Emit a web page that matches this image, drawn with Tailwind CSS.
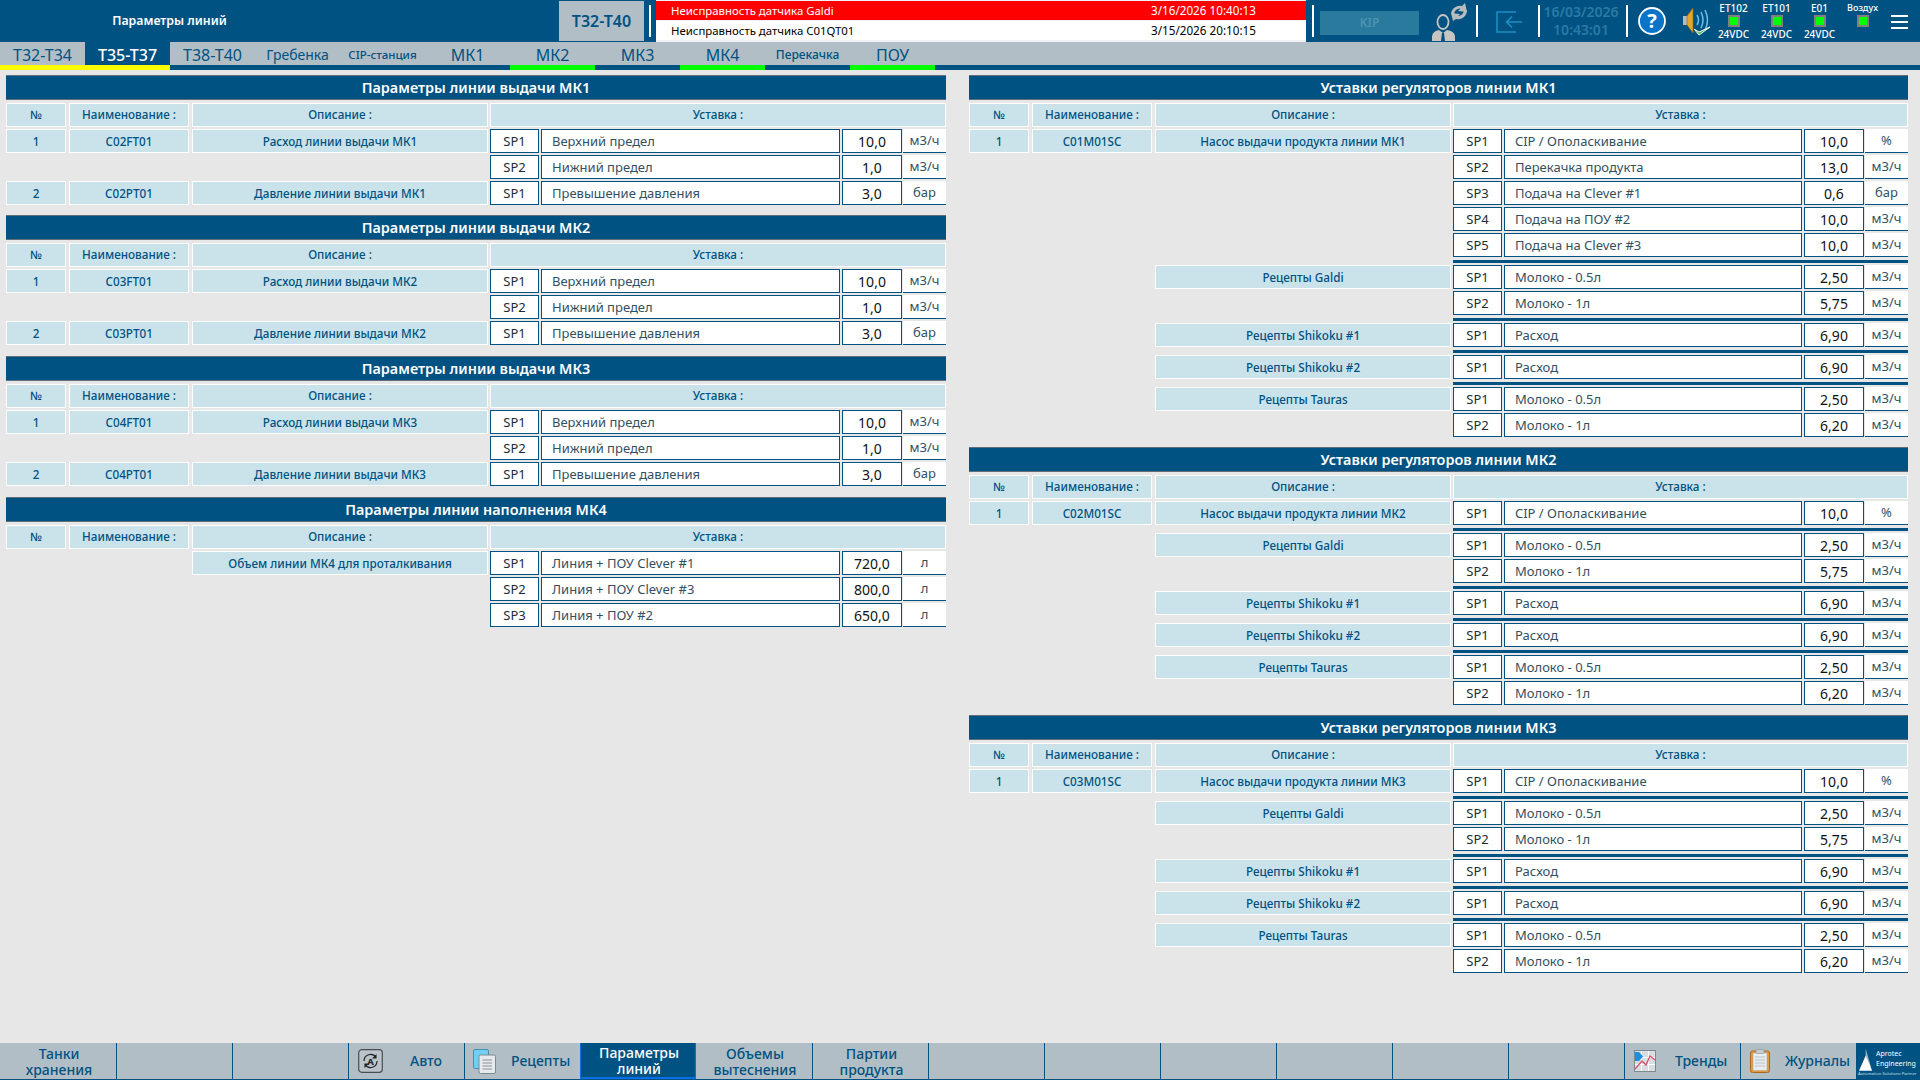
<!DOCTYPE html>
<html lang="ru">
<head>
<meta charset="utf-8">
<title>Параметры линий</title>
<script src="https://cdn.jsdelivr.net/npm/@tailwindcss/browser@4"></script>
</head>
<body class="m-0">
<div class="w-[1920px] h-[1080px] overflow-hidden flex flex-col bg-[#e7e7e7] font-['Noto_Sans',sans-serif] text-[#005282]">

  <!-- header -->
  <header class="h-[42px] shrink-0 flex items-stretch bg-[#005282] text-white">
    <div class="w-[559px] flex items-center justify-center pr-[220px] pt-[1px] text-[12.3px] font-semibold"><span>Параметры линий</span></div>
    <div class="w-[85px] my-[1px] bg-[#b2bec5] text-[#005282] text-[16px] font-semibold flex items-center justify-center">Т32-Т40</div>
    <div class="w-[2px] my-[5px] ml-[5px] bg-white"></div>
    <div class="w-[650px] ml-[5px] bg-[#eef0f1] flex flex-col pt-[1px] gap-[1px]">
      <div class="h-[19px] bg-[#ff0000] text-white flex items-center"><span class="w-[495px] pl-[15px] text-[11.4px]">Неисправность датчика Galdi</span><span class="text-[11.7px]">3/16/2026 10:40:13</span></div>
      <div class="h-[19px] bg-white text-black flex items-center"><span class="w-[495px] pl-[15px] text-[11.4px]">Неисправность датчика C01QT01</span><span class="text-[11.7px]">3/15/2026 20:10:15</span></div>
    </div>
    <div class="w-[2px] my-[5px] ml-[6px] bg-white"></div>
    <div class="w-[99px] h-[24px] mt-[11px] ml-[6px] bg-[#2a7a9e] text-[#4b93b3] text-[12px] font-semibold flex items-center justify-center">KIP</div>
    <svg class="w-[36px] h-[39px] mt-[2px] ml-[13px]" viewBox="0 0 36 39">
      <ellipse cx="11" cy="20" rx="5.5" ry="7" fill="none" stroke="#c8c4c2" stroke-width="1.8"/>
      <path d="M0 39 V34 Q1 29 7 28 L11 31 L15 28 Q22 29 23 34 V39 Z" fill="#c8c4c2"/>
      <path d="M10 31 h2 l1 8 h-4 Z" fill="#005282"/>
      <path d="M19 12 A9 9 0 0 1 30 4 L33 1 L35 10 L26 9 L28.5 6.5 A6 6 0 0 0 22 13 Z" fill="#b9bcbd"/>
      <path d="M35 8 A9 9 0 0 1 24 17 L21 19 L19 11 L28 12 L26 14 A6 6 0 0 0 32 8 Z" fill="#b9bcbd"/>
    </svg>
    <div class="w-[2px] my-[5px] ml-[8px] bg-white"></div>
    <svg class="w-[27px] h-[22px] mt-[11px] ml-[18px]" viewBox="0 0 27 22" fill="none" stroke="#1a8fc4" stroke-width="1.6">
      <path d="M20 1 H1 V21 H20"/><path d="M26 11 H11 M16 5.5 L10.5 11 L16 16.5"/>
    </svg>
    <div class="w-[2px] my-[5px] ml-[15px] bg-white"></div>
    <div class="w-[86px] pr-[4px] flex flex-col items-center justify-center text-[14px] leading-[18px] font-semibold text-[#2a7aa5]"><span>16/03/2026</span><span>10:43:01</span></div>
    <div class="w-[2px] my-[5px] bg-white"></div>
    <svg class="w-[28px] h-[28px] mt-[7px] ml-[10px]" viewBox="0 0 28 28">
      <circle cx="14" cy="14" r="13" fill="#0a74c9" stroke="#fff" stroke-width="1.8"/>
      <text x="14" y="21" text-anchor="middle" font-size="20" font-weight="700" fill="#fff" font-family="Noto Sans">?</text>
    </svg>
    <svg class="w-[30px] h-[30px] mt-[7px] ml-[16px]" viewBox="0 0 30 30" fill="none">
      <rect x="1" y="9" width="4" height="9" fill="#b9b9b9"/>
      <path d="M5 9 L11 1 V26 L5 18 Z" fill="#e0a92a" stroke="#8a6a10" stroke-width=".6"/>
      <path d="M15 8 Q18 13 15 18 M19 5 Q23 13 19 21 M23 3 Q28 13 23 23" stroke="#6ec0ea" stroke-width="1.5"/>
      <path d="M12 22 L17 28 L28 20 L17 25 Z" fill="#3fb54a" stroke="#fff" stroke-width="1"/>
    </svg>
    <div class="w-[43px] flex flex-col items-center justify-between text-[10px] leading-[12px] font-medium pt-[2px] pb-[2px]"><span>ET102</span><span class="w-[12px] h-[12px] border-[2px] border-[#808080] bg-[#00ff00]"></span><span>24VDC</span></div>
    <div class="w-[43px] flex flex-col items-center justify-between text-[10px] leading-[12px] font-medium pt-[2px] pb-[2px]"><span>ET101</span><span class="w-[12px] h-[12px] border-[2px] border-[#808080] bg-[#00ff00]"></span><span>24VDC</span></div>
    <div class="w-[43px] flex flex-col items-center justify-between text-[10px] leading-[12px] font-medium pt-[2px] pb-[2px]"><span>E01</span><span class="w-[12px] h-[12px] border-[2px] border-[#808080] bg-[#00ff00]"></span><span>24VDC</span></div>
    <div class="w-[43px] flex flex-col items-center gap-[1px] text-[9px] leading-[12px] font-medium pt-[2px]"><span>Воздух</span><span class="w-[12px] h-[12px] border-[2px] border-[#808080] bg-[#00ff00]"></span></div>
    <div class="w-[17px] ml-[7px] mt-[15px] h-[14px] flex flex-col justify-between"><span class="h-[2px] bg-white"></span><span class="h-[2px] bg-white"></span><span class="h-[2px] bg-white"></span></div>
  </header>

  <!-- tabs -->
  <nav class="h-[28px] shrink-0 flex bg-[#b2bec5] border-b-[5px] border-[#005282]">
    <div class="w-[85px] h-[28px] pt-[2px] border-b-[5px] border-[#ffff00] flex items-center justify-center text-[16px]">Т32-Т34</div>
    <div class="w-[85px] h-[28px] pt-[2px] border-b-[5px] border-[#ffff00] bg-[#005282] text-white font-medium flex items-center justify-center text-[16px]">Т35-Т37</div>
    <div class="w-[85px] pt-[2px] flex items-center justify-center text-[16px]">Т38-Т40</div>
    <div class="w-[85px] pt-[2px] flex items-center justify-center text-[14px]">Гребенка</div>
    <div class="w-[85px] pt-[2px] flex items-center justify-center text-[11.5px] font-medium">CIP-станция</div>
    <div class="w-[85px] pt-[2px] flex items-center justify-center text-[16px]">МК1</div>
    <div class="w-[85px] h-[28px] pt-[2px] border-b-[5px] border-[#00ff00] flex items-center justify-center text-[16px]">МК2</div>
    <div class="w-[85px] pt-[2px] flex items-center justify-center text-[16px]">МК3</div>
    <div class="w-[85px] h-[28px] pt-[2px] border-b-[5px] border-[#00ff00] flex items-center justify-center text-[16px]">МК4</div>
    <div class="w-[85px] pt-[2px] flex items-center justify-center text-[12px] font-medium">Перекачка</div>
    <div class="w-[85px] h-[28px] pt-[2px] border-b-[5px] border-[#00ff00] flex items-center justify-center text-[16px]">ПОУ</div>
  </nav>

  <!-- content -->
  <main class="flex-1 min-h-0 flex pt-[5px]">
    <div id="left" class="w-[940px] ml-[6px]"></div>
    <div id="right" class="w-[939px] ml-[23px]"></div>
  </main>

  <!-- footer -->
  <footer class="h-[37px] shrink-0 flex bg-[#b2bec5] border-b-[1px] border-[#005282] text-[14px] leading-[16px] font-medium text-center">
    <div class="w-[116px] flex items-center justify-center pl-[2px] pt-[1px]">Танки<br>хранения</div>
    <div class="w-[116px] border-l border-[#005282]"></div>
    <div class="w-[116px] border-l border-[#005282]"></div>
    <div class="w-[116px] border-l border-[#005282] flex items-center pl-[9px]">
      <svg class="w-[25px] h-[24px]" viewBox="0 0 25 24" fill="none"><rect x=".7" y=".7" width="23.6" height="22.6" rx="3" fill="#b9c3c9" stroke="#4a4f52" stroke-width="1.2"/><path d="M6 12 A6.5 6.5 0 0 1 18 8.5 M19 12 A6.5 6.5 0 0 1 7 15.5" stroke="#222" stroke-width="1.2"/><path d="M18.5 5 V9.5 H14 Z M6.5 19 V14.5 H11 Z" fill="#222"/><text x="12.5" y="15.5" text-anchor="middle" font-size="9.5" font-weight="700" fill="#222" font-family="Noto Sans">A</text></svg>
      <span class="ml-[27px]">Авто</span>
    </div>
    <div class="w-[116px] border-l border-[#005282] flex items-center pl-[8px]">
      <svg class="w-[23px] h-[25px]" viewBox="0 0 23 25"><rect x=".5" y=".5" width="15" height="19" rx="1.5" fill="#6fd0f2" stroke="#4a8fae"/><rect x="6" y="6" width="16.5" height="18.5" rx="1.5" fill="#e6eaec" stroke="#7d8a90"/><path d="M9.5 11 H19 M9.5 14 H19 M9.5 17 H19 M9.5 20 H19" stroke="#8a9398"/></svg>
      <span class="ml-[15px]">Рецепты</span>
    </div>
    <div class="w-[116px] bg-[#005282] text-white border-x-[1px] border-b-[2px] border-[#0a6ee6] flex items-center justify-center pl-[2px] pt-[1px]">Параметры<br>линий</div>
    <div class="w-[116px] flex items-center justify-center pl-[2px] pt-[1px]">Объемы<br>вытеснения</div>
    <div class="w-[116px] border-l border-[#005282] flex items-center justify-center pl-[2px] pt-[1px]">Партии<br>продукта</div>
    <div class="w-[116px] border-l border-[#005282]"></div>
    <div class="w-[116px] border-l border-[#005282]"></div>
    <div class="w-[116px] border-l border-[#005282]"></div>
    <div class="w-[116px] border-l border-[#005282]"></div>
    <div class="w-[116px] border-l border-[#005282]"></div>
    <div class="w-[116px] border-l border-[#005282]"></div>
    <div class="w-[116px] border-l border-[#005282] flex items-center pl-[9px]">
      <svg class="w-[22px] h-[22px]" viewBox="0 0 22 22" fill="none"><rect x=".5" y=".5" width="21" height="21" fill="#d8dfe2" stroke="#7d8a90"/><path d="M1 7.5 H21 M1 14.5 H21 M7.5 1 V21 M14.5 1 V21" stroke="#fff"/><path d="M1 19 L8 11 L12 15 L16 6 L21 10" stroke="#e0506a" stroke-width="1.3"/><path d="M1 2 H5 L9 6.5 L5 11 H1 Z" fill="#1b8fe0"/></svg>
      <span class="ml-[19px]">Тренды</span>
    </div>
    <div class="w-[116px] border-l border-[#005282] flex items-center pl-[9px]">
      <svg class="w-[20px] h-[24px]" viewBox="0 0 20 24"><rect x=".5" y="2" width="19" height="21.5" rx="2" fill="#e79a3c" stroke="#a86a1e"/><rect x="3" y="4" width="14" height="17.5" fill="#e8edef" stroke="#9aa5aa" stroke-width=".5"/><rect x="6" y=".5" width="8" height="4" rx="1" fill="#c7ced2" stroke="#7d8a90" stroke-width=".5"/><path d="M5 8 H15 M5 11 H15 M5 14 H15 M5 17 H15" stroke="#b9c2c6"/></svg>
      <span class="ml-[15px]">Журналы</span>
    </div>
    <div class="w-[64px] bg-[#005282] text-white relative overflow-hidden">
      <svg class="absolute left-[3px] top-[5px] w-[17px] h-[23px]" viewBox="0 0 18 24"><path d="M7 0 L13 21 L7 17 Z" fill="#9fb6c5"/><path d="M7 8 L14 24 L0 24 Z" fill="#fff"/></svg>
      <span class="absolute left-[20px] top-[6px] text-[7px] leading-[10px] font-normal text-left">Aprotec<br>Engineering</span>
      <span class="absolute left-[2px] top-[28px] text-[4.2px] leading-[6px] font-normal whitespace-nowrap text-[#cfe0ea]">Automation Solutions Partner</span>
    </div>
  </footer>
</div>

<script>
const cellLabel = "w-[60px] h-[24px] shrink-0 border border-white bg-[#cae2ea] flex items-center justify-center text-[11.7px] font-medium";
const cellName = "w-[120px] h-[24px] shrink-0 border border-white bg-[#cae2ea] flex items-center justify-center text-[11.7px] font-medium";
const cellDesc = "w-[296px] h-[24px] shrink-0 border border-white bg-[#cae2ea] flex items-center justify-center text-[11.7px] font-medium";
const cellHead = "flex-1 h-[24px] border border-white bg-[#cae2ea] flex items-center justify-center text-[11.7px] font-medium";
const blank60 = "w-[60px] h-[24px] shrink-0";
const blank120 = "w-[120px] h-[24px] shrink-0";
const blank296 = "w-[296px] h-[24px] shrink-0";
const spBox = "w-[49px] h-[24px] shrink-0 border-[1.5px] border-[#005282] bg-white flex items-center justify-center pt-[2px] text-[13px] text-[#1c2c36]";
const nameBox = "flex-1 h-[24px] ml-[2px] border-[1.5px] border-[#005282] bg-white flex items-center pl-[10px] pt-[1px] text-[13px] text-[#33505f]";
const valBox = "w-[60px] h-[24px] shrink-0 ml-[2px] border-[1.5px] border-[#005282] bg-white flex items-center justify-center text-[14px] text-[#111]";
const unitBox = "w-[43px] h-[24px] shrink-0 ml-[1px] border-b-[1.5px] border-[#005282] bg-white flex items-center justify-center pt-[1px] text-[13px] text-[#33505f]";

function row(r){
  if(r==='bar') return '<div class="h-[3px] mt-[1px] ml-[484px] bg-[#005282]"></div>';
  const [n,name,desc,sp,label,val,unit]=r;
  return '<div class="flex">'
    +(n?`<div class="pt-[2px] ${cellLabel}">${n}</div>`:`<div class="${blank60}"></div>`)
    +(name?`<div class="ml-[3px] pt-[2px] ${cellName}">${name}</div>`:`<div class="ml-[3px] ${blank120}"></div>`)
    +(desc?`<div class="ml-[3px] pt-[2px] ${cellDesc}">${desc}</div>`:`<div class="ml-[3px] ${blank296}"></div>`)
    +`<div class="ml-[2px] flex-1 flex"><div class="${spBox}">${sp}</div><div class="${nameBox}">${label}</div><div class="${valBox}">${val}</div><div class="${unitBox}">${unit}</div></div></div>`;
}
function section(title,rows,mb){
  return `<section class="flex flex-col gap-[2px] ${mb}">`
    +`<div class="h-[25px] mb-[1px] border-y border-[#5f6f7a] bg-[#005282] text-white text-[14.4px] font-semibold flex items-center justify-center">${title}</div>`
    +`<div class="flex"><div class="${cellLabel}">№</div><div class="ml-[3px] ${cellName}">Наименование :</div><div class="ml-[3px] ${cellDesc}">Описание :</div><div class="ml-[2px] ${cellHead}">Уставка :</div></div>`
    +rows.map(row).join('')+'</section>';
}
const M='м3/ч';
function lineRows(k,kk){return [
 ['1',`C0${k}FT01`,`Расход линии выдачи МК${kk}`,'SP1','Верхний предел','10,0',M],
 ['','','','SP2','Нижний предел','1,0',M],
 ['2',`C0${k}PT01`,`Давление линии выдачи МК${kk}`,'SP1','Превышение давления','3,0','бар']];}
const recipes=(a,b,c,d,e,f)=>[
 'bar',
 ['','','Рецепты Galdi','SP1','Молоко - 0.5л',a,M],
 ['','','','SP2','Молоко - 1л',b,M],
 'bar',
 ['','','Рецепты Shikoku #1','SP1','Расход',c,M],
 'bar',
 ['','','Рецепты Shikoku #2','SP1','Расход',d,M],
 'bar',
 ['','','Рецепты Tauras','SP1','Молоко - 0.5л',e,M],
 ['','','','SP2','Молоко - 1л',f,M]];

document.getElementById('left').innerHTML=
 section('Параметры линии выдачи МК1',lineRows(2,1),'mb-[10px]')+
 section('Параметры линии выдачи МК2',lineRows(3,2),'mb-[11px]')+
 section('Параметры линии выдачи МК3',lineRows(4,3),'mb-[11px]')+
 section('Параметры линии наполнения МК4',[
  ['','','Объем линии МК4 для проталкивания','SP1','Линия + ПОУ Clever #1','720,0','л'],
  ['','','','SP2','Линия + ПОУ Clever #3','800,0','л'],
  ['','','','SP3','Линия + ПОУ #2','650,0','л']],'mb-0');

document.getElementById('right').innerHTML=
 section('Уставки регуляторов линии МК1',[
  ['1','C01M01SC','Насос выдачи продукта линии МК1','SP1','CIP / Ополаскивание','10,0','%'],
  ['','','','SP2','Перекачка продукта','13,0',M],
  ['','','','SP3','Подача на Clever #1','0,6','бар'],
  ['','','','SP4','Подача на ПОУ #2','10,0',M],
  ['','','','SP5','Подача на Clever #3','10,0',M],
  ...recipes('2,50','5,75','6,90','6,90','2,50','6,20')],'mb-[10px]')+
 section('Уставки регуляторов линии МК2',[
  ['1','C02M01SC','Насос выдачи продукта линии МК2','SP1','CIP / Ополаскивание','10,0','%'],
  ...recipes('2,50','5,75','6,90','6,90','2,50','6,20')],'mb-[10px]')+
 section('Уставки регуляторов линии МК3',[
  ['1','C03M01SC','Насос выдачи продукта линии МК3','SP1','CIP / Ополаскивание','10,0','%'],
  ...recipes('2,50','5,75','6,90','6,90','2,50','6,20')],'mb-0');
</script>
</body>
</html>
